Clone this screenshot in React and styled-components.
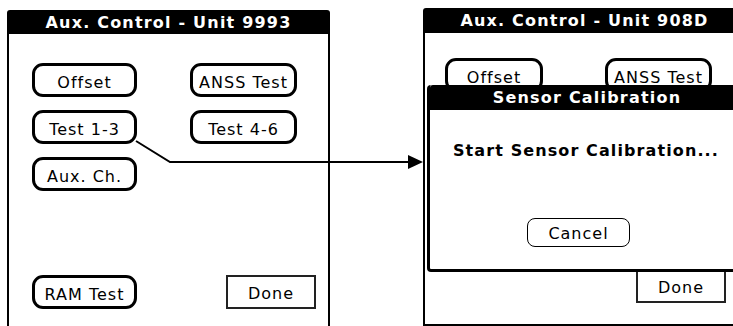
import React from "react";
import styled, {createGlobalStyle} from 'styled-components';

const GlobalStyle = createGlobalStyle`
  html, body {
    margin: 0;
    padding: 0;
    background: #fff;
    overflow: hidden;
  }
`;

const Stage = styled.div`
  position: relative;
  width: 733px;
  height: 326px;
  overflow: hidden;
  display: flex;
  align-items: flex-start;
  gap: 93px;
  padding-left: 7px;
  box-sizing: border-box;
  font-family: "DejaVu Sans", "Liberation Sans", sans-serif;
  color: #000;
`;

const Screen = styled.div`
  position: relative;
  flex: none;
  width: 323px;
  height: 318px;
  margin-top: ${p => p.$top}px;
  display: flex;
  flex-direction: column;
`;

const TitleBar = styled.div`
  flex: none;
  height: ${p => p.$h || 24}px;
  background: #000;
  color: #fff;
  border-radius: 3px 3px 0 0;
  display: flex;
  align-items: center;
  justify-content: center;
  font-weight: bold;
  font-size: 16px;
  letter-spacing: 1.2px;
  white-space: nowrap;
`;

const Body = styled.div`
  flex: 1;
  border: 2px solid #000;
  border-top: none;
  display: flex;
  flex-direction: column;
  padding: ${p => p.$pad || '29px 12px 17px 23px'};
`;

const ButtonGrid = styled.div`
  display: grid;
  grid-template-columns: ${p => p.$cols || '105px 107px'};
  grid-auto-rows: 34px;
  column-gap: ${p => p.$gap || 53}px;
  row-gap: 13px;
`;

const BottomRow = styled.div`
  margin-top: auto;
  display: flex;
  align-items: center;
`;

const PalmButton = styled.button`
  box-sizing: border-box;
  width: 100%;
  height: 34px;
  padding: 4px 0 0;
  background: #fff;
  border: 3px solid #000;
  border-radius: 11px;
  font-family: inherit;
  font-size: 16px;
  letter-spacing: 1px;
  color: #000;
`;

const RamButton = styled(PalmButton)`
  width: 105px;
`;

const DoneButton = styled.button`
  box-sizing: border-box;
  width: 90px;
  height: 34px;
  margin-left: auto;
  padding: 2px 0 0;
  background: #fff;
  border: 2px solid #222;
  font-family: inherit;
  font-size: 16px;
  letter-spacing: 1px;
  color: #000;
`;

const Dialog = styled.div`
  position: absolute;
  left: 4px;
  top: 77px;
  width: 320px;
  height: 187px;
  box-sizing: border-box;
  border: 3px solid #000;
  border-top: none;
  border-radius: 4px;
  background: #fff;
  display: flex;
  flex-direction: column;
`;

const Message = styled.div`
  margin: 31px 0 0 23px;
  font-weight: bold;
  font-size: 16px;
  letter-spacing: 1.1px;
  white-space: nowrap;
`;

const CancelButton = styled.button`
  box-sizing: border-box;
  align-self: flex-start;
  width: 103px;
  height: 29px;
  margin: 58px 0 0 97px;
  padding: 2px 0 0;
  background: #fff;
  border: 1px solid #000;
  border-radius: 8px;
  font-family: inherit;
  font-size: 16px;
  letter-spacing: 1px;
  color: #000;
`;

const Overlay = styled.svg`
  position: absolute;
  left: 0;
  top: 0;
  pointer-events: none;
`;

const leftButtons = ['Offset', 'ANSS Test', 'Test 1-3', 'Test 4-6', 'Aux. Ch.'];

const App = () => {
    return (
        <Stage>
            <GlobalStyle/>
            <Screen $top={10}>
                <TitleBar>Aux. Control - Unit 9993</TitleBar>
                <Body>
                    <ButtonGrid>
                        {leftButtons.map(label => (
                            <PalmButton key={label}>{label}</PalmButton>
                        ))}
                    </ButtonGrid>
                    <BottomRow>
                        <RamButton>RAM Test</RamButton>
                        <DoneButton>Done</DoneButton>
                    </BottomRow>
                </Body>
            </Screen>

            <Screen $top={8}>
                <TitleBar $h={25}>Aux. Control - Unit 908D</TitleBar>
                <Body $pad="25px 18px 21px 20px">
                    <ButtonGrid $cols="98px 107px" $gap={62}>
                        <PalmButton>Offset</PalmButton>
                        <PalmButton>ANSS Test</PalmButton>
                    </ButtonGrid>
                    <BottomRow>
                        <DoneButton>Done</DoneButton>
                    </BottomRow>
                </Body>
                <Dialog>
                    <TitleBar $h={25}>Sensor Calibration</TitleBar>
                    <Message>Start Sensor Calibration...</Message>
                    <CancelButton>Cancel</CancelButton>
                </Dialog>
            </Screen>

            {/* pointer from Test 1-3 to the dialog screen */}
            <Overlay width="733" height="326" viewBox="0 0 733 326">
                <polyline points="136,141 170,162 410,162" fill="none" stroke="#000" strokeWidth="2"/>
                <polygon points="408,155 423,162 408,169" fill="#000"/>
            </Overlay>
        </Stage>
    );
};

export default App;
